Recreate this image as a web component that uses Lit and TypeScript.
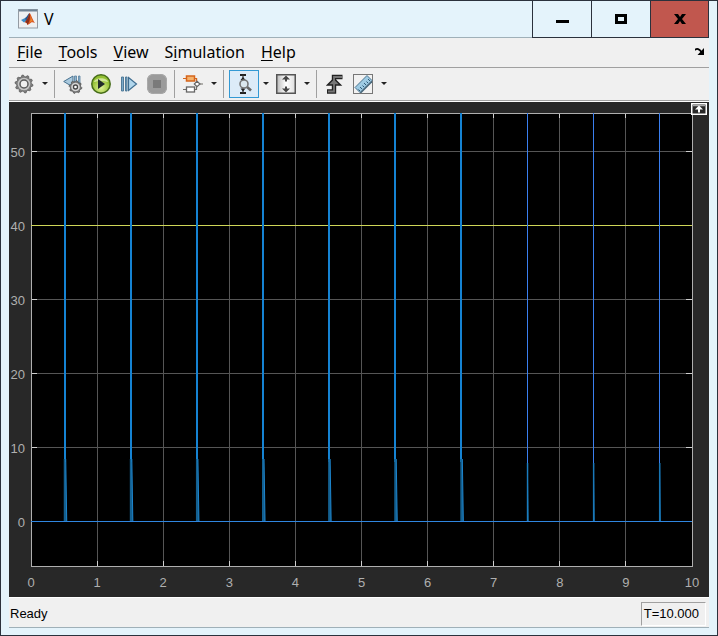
import { LitElement, html, svg, css } from "lit";
import { customElement } from "lit/decorators.js";

const X_MAX = 10;
const Y_MIN = -6.08;
const Y_MAX = 55.14;
const Y_TICKS = [0, 10, 20, 30, 40, 50];
const X_TICKS = [0, 1, 2, 3, 4, 5, 6, 7, 8, 9, 10];
const PULSES = [0.495, 1.495, 2.495, 3.495, 4.495, 5.495, 6.495, 7.5, 8.5, 9.5];
const REFERENCE_LEVEL = 40;

const px = (t: number) => `${(t / X_MAX) * 100}%`;
const py = (v: number) => `${((Y_MAX - v) / (Y_MAX - Y_MIN)) * 100}%`;

@customElement("scope-plot")
export class ScopePlot extends LitElement {
  static styles = css`
    :host {
      display: flex;
      background: #282828;
      padding: 11px 17px 31px 22px;
      box-sizing: border-box;
      position: relative;
      min-height: 0;
    }
    .plot {
      flex: 1;
      min-width: 0;
      width: 100%;
      height: 100%;
      overflow: visible;
      display: block;
      font: 13px "Liberation Sans", Arial, sans-serif;
    }
    .crisp { shape-rendering: crispEdges; }
    .bg { fill: #000; }
    .frame { fill: none; stroke: #afafaf; }
    .grid { stroke: #555; }
    .tick { stroke: #cfcfcf; }
    .label { fill: #afafaf; }
    .y { text-anchor: end; }
    .x { text-anchor: middle; }
    .level { fill: #cfd658; }
    .base { fill: #2f86e0; }
    .wide { fill: #1583d3; }
    .thin { fill: #3a7ff0; }
    .decay { fill: #146090; }
    .edge { stroke: #1d86cf; fill: none; }
    .inner { overflow: visible; }
    .dock {
      position: absolute;
      top: 1px;
      right: 2px;
      width: 16px;
      height: 12px;
      padding: 0;
      border: 0;
      background: none;
    }
    .dock svg { display: block; }
  `;

  private pulse(t: number) {
    const wide = t < 7;
    return svg`
      <rect class="crisp ${wide ? "wide" : "thin"}" x=${px(t)} width=${wide ? 2 : 1} y="0" height=${py(wide ? 8 : 0)}></rect>
      <svg class="inner" x=${px(t)} y=${py(0)}>
        <path class="decay" d=${wide ? "M0 -62H2L3 0H0Z" : "M0 -58H1L2 0H0Z"}></path>
        <path class="edge" d=${wide ? "M2 -62L3 0" : "M1 -58L1 0"}></path>
      </svg>`;
  }

  render() {
    return html`
      <svg class="plot" role="img" aria-label="Signal V over time">
        <rect class="bg" width="100%" height="100%"></rect>
        ${X_TICKS.slice(1, -1).map((t) => svg`
          <line class="crisp grid" x1=${px(t)} x2=${px(t)} y1="0" y2="100%"></line>
          <line class="crisp tick" x1=${px(t)} x2=${px(t)} y1="0" y2="5"></line>
          <svg class="inner" x=${px(t)} y="100%"><line class="crisp tick" x1="0" x2="0" y1="-5" y2="0"></line></svg>`)}
        ${Y_TICKS.map((v) => svg`
          <line class="crisp grid" x1="0" x2="100%" y1=${py(v)} y2=${py(v)}></line>
          <line class="crisp tick" x1="0" x2="6" y1=${py(v)} y2=${py(v)}></line>
          <svg class="inner" x="100%" y=${py(v)}><line class="crisp tick" x1="-6" x2="0" y1="0" y2="0"></line></svg>`)}
        <rect class="crisp frame" width="100%" height="100%"></rect>
        <rect class="crisp level" width="100%" height="1" y=${py(REFERENCE_LEVEL)}></rect>
        ${PULSES.map((t) => this.pulse(t))}
        <rect class="crisp base" width="100%" height="1" y=${py(0)}></rect>
        ${Y_TICKS.map((v) => svg`<text class="label y" x="-6" y=${py(v)} dy="6">${v}</text>`)}
        ${X_TICKS.map((t) => svg`
          <svg class="inner" x=${px(t)} y="100%"><text class="label x" x="0" y="21">${t}</text></svg>`)}
      </svg>
      <button class="dock" aria-label="Maximize axes">
        <svg width="16" height="12" viewBox="0 0 16 12">
          <rect x=".75" y=".75" width="14.5" height="10.5" fill="#282828" stroke="#fff" stroke-width="1.5"></rect>
          <path d="M2 2.5H14" stroke="#aaa" stroke-width="1.5"></path>
          <path d="M8 2.5L12 6.5H9V9.5H7V6.5H4Z" fill="#fff"></path>
        </svg>
      </button>
    `;
  }
}

const gearTeeth = (cx: number, cy: number, r: number, n: number) => {
  const pts: string[] = [];
  for (let i = 0; i < n * 4; i++) {
    const a = ((i + 0.5) / (n * 4)) * Math.PI * 2;
    const rad = i % 4 < 2 ? r : r * 0.82;
    pts.push(`${(cx + Math.cos(a) * rad).toFixed(2)},${(cy + Math.sin(a) * rad).toFixed(2)}`);
  }
  return pts.join(" ");
};

const icons = {
  matlab: html`<svg width="20" height="20" viewBox="0 0 20 20">
    <rect x=".5" y=".5" width="19" height="18.5" fill="#eef0f2" stroke="#939ba3"></rect>
    <path d="M1 1.5H19" stroke="#6e8294" stroke-width="2"></path>
    <path d="M3 11L7 9L9 11L6 13.5Z" fill="#3d8cc8"></path>
    <path d="M7 9C9 8 10 5 11.5 4L10.500 12L8 12Z" fill="#26558c"></path>
    <path d="M11.500 4C13 5 14.500 11 17 14C15 13 13.500 12.500 12 14.500L9.500 16C9 14 8 13 6.500 13.500C9 11.500 10 8 11.500 4Z" fill="#d8531e"></path>
    <path d="M11.500 4C12.500 7 12 12 9.500 16C9 14 8 13 6.500 13.500C9 11.500 10.500 8 11.500 4Z" fill="#8c2f1c"></path>
    <path d="M12 6C13 9 13 12 11 14C12.500 12.500 14 12 15 12.500C13.500 10.500 13 8 12 6Z" fill="#f08a2c"></path>
  </svg>`,
  gear: html`<svg width="20" height="20" viewBox="0 0 20 20">
    <polygon points=${gearTeeth(10, 10, 9, 10)} fill="#7c7c7c" stroke="#5c5c5c" stroke-width=".8"></polygon>
    <circle cx="10" cy="10" r="6.300" fill="#c4c4c4"></circle>
    <circle cx="10" cy="10" r="4" fill="#efefef" stroke="#5c5c5c" stroke-width="1.500"></circle>
  </svg>`,
  stepBack: html`<svg width="20" height="20" viewBox="0 0 20 20">
    <path d="M.7 7.500L10 2V13Z" fill="#a9c9de" stroke="#48718f"></path>
    <path d="M11.500 2H13.500V11H11.500ZM15.500 2H17V12H15.500Z" fill="#8db6d2" stroke="#587f9c" stroke-width=".8"></path>
    <polygon points=${gearTeeth(12.5, 13, 6.4, 8)} fill="#777" stroke="#4c4c4c" stroke-width=".7"></polygon>
    <circle cx="12.500" cy="13" r="4.300" fill="#d4d4d4"></circle>
    <circle cx="12.500" cy="13" r="2" fill="#fff" stroke="#444" stroke-width="1.300"></circle>
  </svg>`,
  run: html`<svg width="22" height="22" viewBox="0 0 22 22">
    <defs><radialGradient id="g" cy=".7"><stop offset="0" stop-color="#e0f398"></stop><stop offset="1" stop-color="#92bf32"></stop></radialGradient></defs>
    <circle cx="11" cy="11" r="9.200" fill="url(#g)" stroke="#466c1a" stroke-width="1.500"></circle>
    <path d="M4 9C5 4 17 4 18 9C14 7.500 8 7.500 4 9Z" fill="#f0f9cb" opacity=".65"></path>
    <path d="M8 6L15 11L8 16Z" fill="#222b2b"></path>
  </svg>`,
  step: html`<svg width="20" height="20" viewBox="0 0 20 20">
    <path d="M2.500 3H4.500V17H2.500Z M6.500 3H8V17H6.500Z" fill="#7ba9c8" stroke="#467392" stroke-width=".9"></path>
    <path d="M9.500 3.500L17.500 10L9.500 16.500Z" fill="#b1d6ec" stroke="#3f6d90" stroke-width="1.200"></path>
  </svg>`,
  stop: html`<svg width="22" height="22" viewBox="0 0 22 22">
    <rect x="1" y="1" width="20" height="20" rx="6" fill="#9b9b9b"></rect>
    <rect x="1.500" y="1.500" width="19" height="19" rx="6" fill="none" stroke="#aaa"></rect>
    <rect x="7" y="7" width="8" height="8" fill="#7a7a7a"></rect>
  </svg>`,
  blocks: html`<svg width="20" height="20" viewBox="0 0 20 20">
    <path d="M0 4.500H13.500V8M0 15.500H13.500V12M16 10H20" fill="none" stroke="#716e69" stroke-width="1.200"></path>
    <path d="M0 4.500H4M11 4.500H13.500V7" fill="none" stroke="#d5651c" stroke-width="1.200"></path>
    <rect x="3.500" y="2" width="8" height="5" fill="#f6b26a" stroke="#d5651c" stroke-width="1.500"></rect>
    <rect x="3.500" y="13" width="8" height="5" fill="#fff" stroke="#666" stroke-width="1.300"></rect>
    <path d="M14 7.300L17 10L14 12.700L11.300 10Z" fill="#fff" stroke="#666" stroke-width="1.200"></path>
  </svg>`,
  zoomY: html`<svg width="20" height="20" viewBox="0 0 20 20">
    <path d="M6 1H12M6 19H12" stroke="#222" stroke-width="1.800"></path>
    <path d="M9 1.500V18.500" stroke="#444" stroke-width="1.300"></path>
    <path d="M6.500 6H11.500L9 3ZM6.500 14.500H11.500L9 17.500Z" fill="#222"></path>
    <path d="M12.500 12.500L17 16.500" stroke="#666" stroke-width="2.600"></path>
    <circle cx="10" cy="10" r="4" fill="#dbe7ee" stroke="#777" stroke-width="1.600"></circle>
  </svg>`,
  fit: html`<svg width="20" height="20" viewBox="0 0 20 20">
    <defs><linearGradient id="f" x2="1"><stop offset="0" stop-color="#bbb"></stop><stop offset=".5" stop-color="#fff"></stop><stop offset="1" stop-color="#ddd"></stop></linearGradient></defs>
    <rect x=".75" y=".75" width="18.500" height="18.500" fill="url(#f)" stroke="#555" stroke-width="1.500"></rect>
    <path d="M10 1.500L14 5.500H11V7.500H9V5.500H6ZM10 18.500L14 14.500H11V12.500H9V14.500H6Z" fill="#444"></path>
  </svg>`,
  trigger: html`<svg width="18" height="20" viewBox="0 0 18 20">
    <path d="M1 17.500H8V3H16.500" fill="none" stroke="#222" stroke-width="4.400"></path>
    <path d="M1.500 11L8 4.500L14.500 11Z" fill="#777" stroke="#222" stroke-width="1.500"></path>
    <path d="M2 17.500H8V3H16" fill="none" stroke="#777" stroke-width="1.800"></path>
  </svg>`,
  measure: html`<svg width="20" height="20" viewBox="0 0 20 20">
    <rect x=".5" y=".5" width="19" height="19" fill="#f2f2f2" stroke="#777"></rect>
    <path d="M2 13.500L14 1.500L19 6.500L7 18.500Z" fill="#9ecbe4" stroke="#4c7590"></path>
    <path d="M7 18.500L19 6.500V8.500L8.500 19H7Z" fill="#456579"></path>
    <path d="M7 17L5.500 15.500M9 15L7 13M11 13L9.500 11.500M13 11L11 9M15 9L13.500 7.500M17 7L15 5" stroke="#2f5b78"></path>
  </svg>`,
};

@customElement("app-root")
export class AppRoot extends LitElement {
  static styles = css`
    :host {
      display: flex;
      flex-direction: column;
      height: 100vh;
      box-sizing: border-box;
      border: 1px solid #2b313c;
      padding: 0 8px 7px;
      background: #e4f3fb;
      color: #000;
      font: 13px "Liberation Sans", Arial, sans-serif;
    }
    button {
      font: inherit;
      color: inherit;
      background: none;
      border: 0;
      padding: 0;
      margin: 0;
    }
    svg { display: block; flex: none; }
    .title {
      display: flex;
      height: 37px;
      flex: none;
      box-sizing: border-box;
      border-bottom: 1px solid #9fb0b8;
    }
    .caption {
      display: flex;
      align-items: center;
      gap: 6px;
      flex: 1;
      margin: 0;
      padding-left: 9px;
      font: 16px "Noto Sans", sans-serif;
    }
    .win {
      width: 59px;
      height: 37px;
      box-sizing: border-box;
      border: solid #2b313c;
      border-width: 0 0 1px 1px;
      display: grid;
      place-items: center;
    }
    .close { background: #c1574e; border-right-width: 1px; }
    .menu {
      display: flex;
      align-items: center;
      height: 30px;
      flex: none;
      box-sizing: border-box;
      padding: 0 4px 2px 8px;
      gap: 16px;
      background: #f0f0f0;
      border-bottom: 1px solid #a0a0a0;
      font: 16px/24px "Noto Sans", sans-serif;
    }
    .menu u { text-underline-offset: 2px; text-decoration-thickness: 1px; }
    .corner { margin-left: auto; }
    .tools {
      display: flex;
      align-items: center;
      height: 34px;
      flex: none;
      box-sizing: border-box;
      background: #f0f0f0;
      border-bottom: 1px solid #fff;
      box-shadow: inset 0 -1px #a0a0a0;
      padding: 0 5px 2px;
    }
    .tool {
      width: 28px;
      height: 28px;
      display: grid;
      place-items: center;
      box-sizing: border-box;
    }
    .lead { width: 20px; margin-right: 4px; }
    .on {
      width: 30px;
      margin: 0 1px;
      border: 1px solid #3399d4;
      background: #dcebf8;
    }
    .drop {
      width: 12px;
      height: 28px;
      display: grid;
      place-items: center;
    }
    .drop::before {
      content: "";
      border: 3px solid transparent;
      border-top-color: #222;
      border-bottom: 0;
    }
    .tool:not(.on) + .drop { margin-left: 1px; }
    .sep {
      width: 1px;
      height: 28px;
      background: #a0a0a0;
      margin: 0 4px 0 3px;
    }
    scope-plot { flex: 1; }
    .status {
      display: flex;
      align-items: center;
      justify-content: space-between;
      height: 31px;
      flex: none;
      box-sizing: border-box;
      border-top: 1px solid #fff;
      border-bottom: 1px solid #9fb0b8;
      background: #f0f0f0;
      padding: 2px 3px 0 1px;
    }
    .time {
      border: 1px solid #a0a0a0;
      border-right-color: #fff;
      border-bottom-color: #fff;
      padding: 0 6px 0 2px;
      line-height: 22px;
    }
  `;

  render() {
    const drop = (name: string) => html`<button class="drop" aria-label=${name}></button>`;
    const tool = (name: string, icon: unknown, extra = "") =>
      html`<button class="tool ${extra}" aria-label=${name}>${icon}</button>`;
    return html`
      <header class="title">
        <h1 class="caption">${icons.matlab}V</h1>
        <button class="win" aria-label="Minimize">
          <svg width="14" height="14" viewBox="0 0 14 14"><path d="M1 8H14V11H1Z"></path></svg>
        </button>
        <button class="win" aria-label="Maximize">
          <svg width="12" height="12" viewBox="0 0 12 12"><path fill-rule="evenodd" d="M0 1H12V11H0ZM3 4V8H9V4Z"></path></svg>
        </button>
        <button class="win close" aria-label="Close">
          <svg width="12" height="12" viewBox="0 0 12 12"><path d="M0 1H4L6 4L8 1H12L8 6L12 11H8L6 8L4 11H0L4 6Z"></path></svg>
        </button>
      </header>
      <nav class="menu">
        <button><u>F</u>ile</button>
        <button><u>T</u>ools</button>
        <button><u>V</u>iew</button>
        <button>S<u>i</u>mulation</button>
        <button><u>H</u>elp</button>
        <button class="corner" aria-label="Dock">
          <svg width="10" height="8" viewBox="0 0 10 8">
            <path d="M0 2C2 0 4 1 6.500 4" fill="none" stroke="#000" stroke-width="1.800"></path>
            <path d="M9 0V7H2.500Z"></path>
          </svg>
        </button>
      </nav>
      <div class="tools" role="toolbar">
        ${tool("Configuration", icons.gear, "lead")}
        ${drop("Configuration options")}
        <span class="sep"></span>
        ${tool("Stepping options", icons.stepBack)}
        ${tool("Run", icons.run)}
        ${tool("Step forward", icons.step)}
        ${tool("Stop", icons.stop)}
        <span class="sep"></span>
        ${tool("Highlight block", icons.blocks)}
        ${drop("Highlight options")}
        <span class="sep"></span>
        ${tool("Zoom Y", icons.zoomY, "on")}
        ${drop("Zoom options")}
        ${tool("Scale Y", icons.fit)}
        ${drop("Scale options")}
        <span class="sep"></span>
        ${tool("Triggers", icons.trigger)}
        ${tool("Cursor measurements", icons.measure)}
        ${drop("Measurement options")}
      </div>
      <scope-plot></scope-plot>
      <footer class="status">
        <span>Ready</span>
        <span class="time">T=10.000</span>
      </footer>
    `;
  }
}
